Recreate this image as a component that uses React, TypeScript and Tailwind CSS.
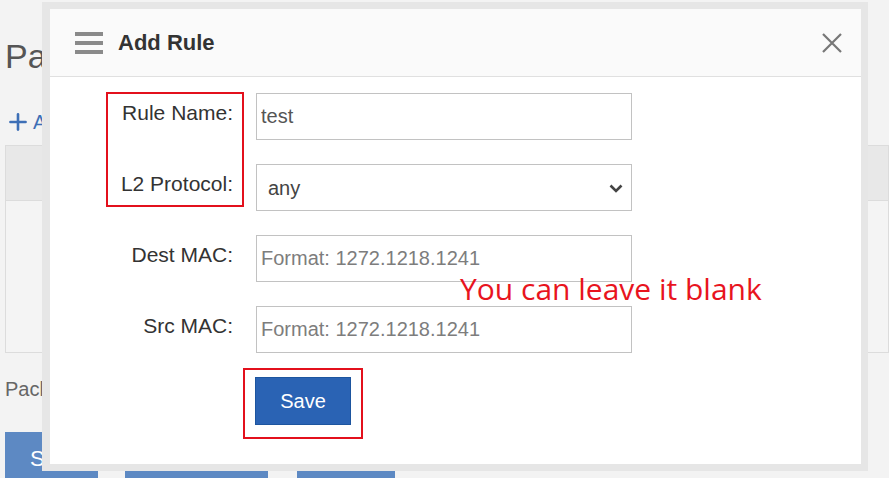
import { Plus } from 'lucide-react';

const fields = [
  { label: 'Rule Name:', value: 'test' },
  { label: 'L2 Protocol:', select: true },
  { label: 'Dest MAC:', placeholder: 'Format: 1272.1218.1241' },
  { label: 'Src MAC:', placeholder: 'Format: 1272.1218.1241' },
];

function FieldRow({ label, value, placeholder, select }: { label: string; value?: string; placeholder?: string; select?: boolean }) {
  return (
    <div className="flex h-[47px]">
      <label className="w-[183px] pt-[8px] text-right text-[21px] leading-[24px] text-[#333]">{label}</label>
      {select ? (
        <div className="relative ml-[23px] h-[47px] w-[376px] border border-[#c2c2c2] bg-white">
          <select
            defaultValue="any"
            className="h-full w-full appearance-none bg-transparent pl-[11px] text-[20px] text-[#444] outline-none"
          >
            <option value="any">any</option>
          </select>
          <svg className="pointer-events-none absolute right-[8px] top-[19px] h-[9px] w-[14px]" viewBox="0 0 14 9" fill="none">
            <path d="M1.5 1.5 7 7l5.5-5.5" stroke="#444" strokeWidth={2.6} />
          </svg>
        </div>
      ) : (
        <input
          defaultValue={value}
          placeholder={placeholder}
          className="ml-[23px] h-[47px] w-[376px] border border-[#c2c2c2] bg-white pl-[4px] text-[20px] text-[#555] outline-none placeholder:text-[#7d7d7d]"
        />
      )}
    </div>
  );
}

export default function App() {
  return (
    <div className="relative h-[485px] w-[889px] overflow-hidden bg-white font-['Liberation_Sans',Arial,sans-serif]">
      {/* page behind the dialog */}
      <div className="h-[478px] overflow-hidden bg-[#f3f3f3] pl-[5px]">
        <h1 className="pt-[36px] text-[34px] leading-[40px] text-[#555]">Packet Filter</h1>
        <div className="mt-[34px] flex h-[24px] items-center gap-[2px] text-[20px] text-[#3d6fb6]">
          <Plus className="h-[26px] w-[26px]" strokeWidth={2.4} />
          <span>Add</span>
        </div>
        <div className="mt-[11px] h-[208px] border border-[#dcdcdc] bg-[#f4f4f4]">
          <div className="h-[55px] border-b border-[#dcdcdc] bg-[#e8e8e8]" />
        </div>
        <p className="mt-[25px] text-[20px] leading-[23px] text-[#666]">Packet Filter List</p>
        <div className="mt-[31px] flex">
          <button className="h-[60px] w-[93px] bg-[#5d89c3] pb-[8px] pl-[25px] text-left text-[22px] text-white">Save</button>
          <button className="ml-[27px] h-[60px] w-[143px] bg-[#5d89c3]" />
          <button className="ml-[29px] h-[60px] w-[98px] bg-[#5d89c3]" />
        </div>
      </div>

      {/* dialog */}
      <div className="absolute left-[42px] top-[2px] h-[469px] w-[826px] bg-[#e6e6e6] p-[7px] pl-[8px]">
        <div className="flex h-full flex-col bg-white">
          <div className="flex h-[68px] items-center border-b border-[#e0e0e0] bg-[#fafafa] pl-[25px] pr-[19px]">
            <div className="flex w-[28px] flex-col gap-[5px]">
              <span className="h-[4px] bg-[#8a8a8a]" />
              <span className="h-[4px] bg-[#8a8a8a]" />
              <span className="h-[4px] bg-[#8a8a8a]" />
            </div>
            <h2 className="ml-[15px] text-[22px] font-bold text-[#333]">Add Rule</h2>
            <svg className="ml-auto h-[20px] w-[20px]" viewBox="0 0 20 20" fill="none">
              <path d="M1 1l18 18M19 1 1 19" stroke="#777" strokeWidth={2.2} />
            </svg>
          </div>
          <div className="flex flex-col gap-[24px] pt-[16px]">
            {fields.map((f) => (
              <FieldRow key={f.label} {...f} />
            ))}
            <div className="pl-[205px]">
              <button className="h-[48px] w-[96px] border border-[#1d559f] bg-[#2a63b4] text-[20px] text-white">Save</button>
            </div>
          </div>
        </div>
      </div>

      {/* annotations */}
      <div className="absolute left-[106px] top-[92px] h-[115px] w-[138px] border-2 border-[#e3101c]" />
      <div className="absolute left-[243px] top-[368px] h-[71px] w-[120px] border-2 border-[#e3101c]" />
      <p className="absolute left-[460px] top-[271px] font-['Open_Sans',sans-serif] text-[30px] leading-[36px] text-[#e8141e]">
        You can leave it blank
      </p>
    </div>
  );
}
